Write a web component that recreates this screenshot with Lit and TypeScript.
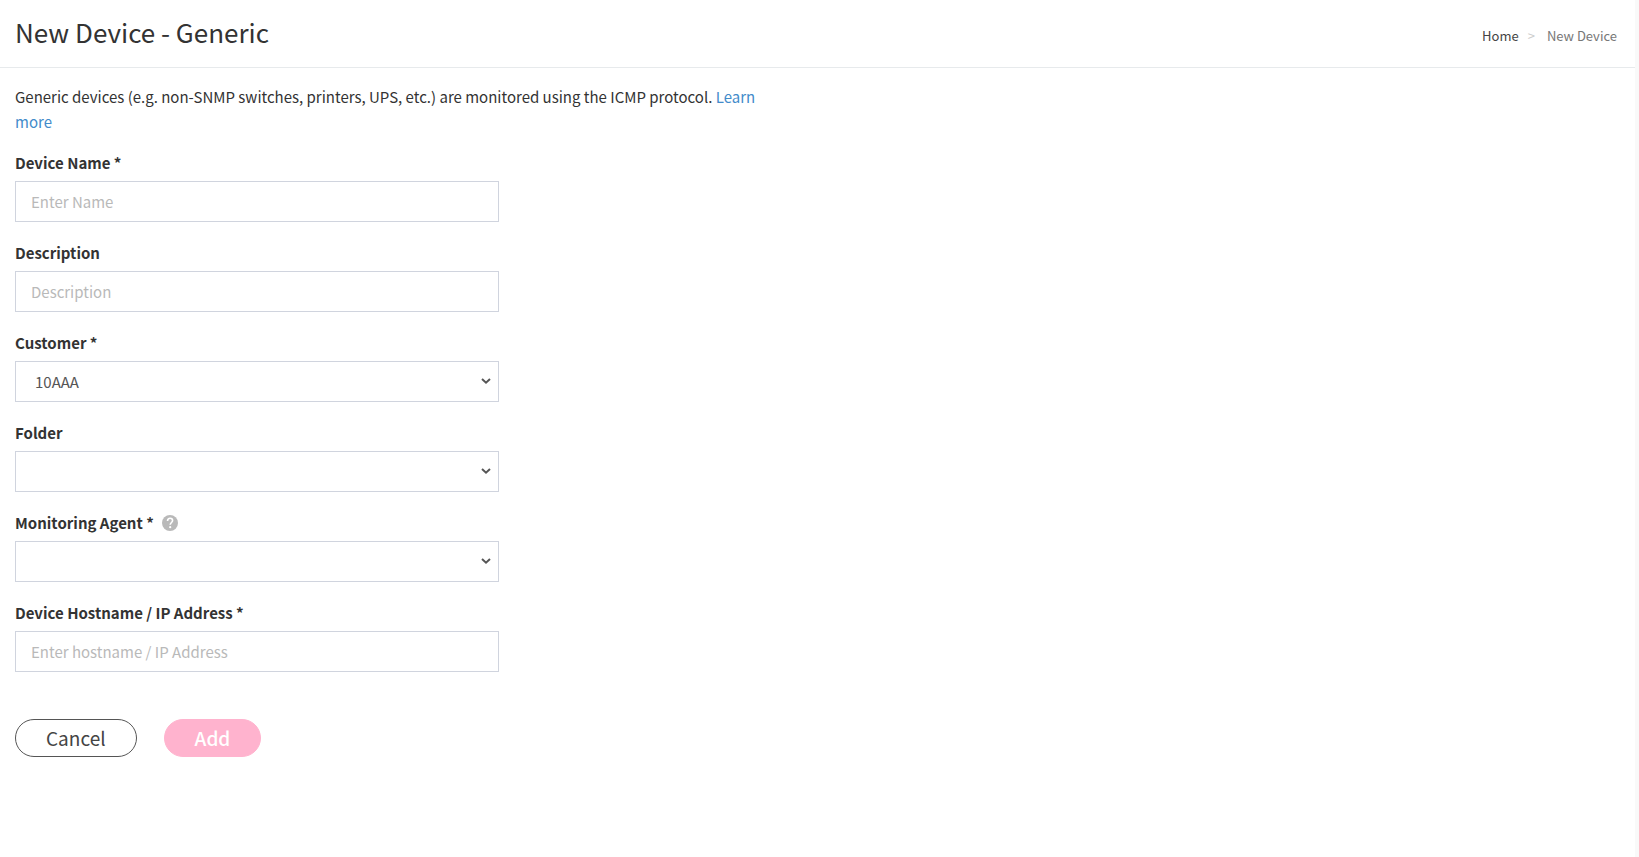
import { LitElement, html, css, svg } from "lit";
import { customElement } from "lit/decorators.js";

const helpIcon = svg`
  <circle cx="8" cy="8" r="8" fill="#b9b9b9"></circle>
  <path d="M5.500 6C5.600 4.200 6.700 3.200 8.100 3.200c1.500 0 2.500.9 2.500 2.300 0 1.900-2.400 2.100-2.400 4.300" fill="none" stroke="#fff" stroke-width="1.600"></path>
  <circle cx="8.200" cy="12.200" r="1.100" fill="#fff"></circle>`;

@customElement("app-root")
export class AppRoot extends LitElement {
  static styles = css`
    :host {
      display: block;
      box-sizing: border-box;
      min-height: 100vh;
      background: #fff;
      border-right: 4px solid #f9f9f9;
      color: #333;
      font-family: "Noto Sans CJK SC", "Noto Sans", sans-serif;
      font-size: 15px;
      line-height: 25px;
    }
    * {
      box-sizing: border-box;
    }
    .header {
      display: flex;
      align-items: center;
      justify-content: space-between;
      padding: 10px 18px 13px 15px;
      border-bottom: 1px solid #e7eaec;
    }
    .title {
      margin: 0;
      font-size: 26px;
      font-weight: 400;
      line-height: 44px;
    }
    .crumbs {
      display: flex;
      gap: 9px;
      margin: 0;
      padding: 8px 0 0;
      list-style: none;
      font-size: 13px;
      line-height: 20px;
      color: #777;
    }
    .crumbs a {
      color: #444;
      text-decoration: none;
    }
    .separator {
      padding-right: 3px;
      color: #ccc;
    }
    .content {
      padding: 16px 15px;
    }
    .intro {
      width: 50%;
      padding-right: 30px;
      margin: 0 0 16px;
    }
    .intro a {
      color: #428bca;
      text-decoration: none;
    }
    .form {
      display: flex;
      flex-direction: column;
      gap: 18px;
      max-width: 484px;
    }
    .field {
      display: flex;
      flex-direction: column;
      gap: 6px;
    }
    .caption {
      display: flex;
      align-items: center;
      gap: 8px;
    }
    .label {
      font-weight: 700;
    }
    .help {
      display: block;
      width: 16px;
      height: 16px;
    }
    .control {
      width: 100%;
      height: 41px;
      margin: 0;
      padding: 0 15px;
      border: 1px solid #d0d4de;
      border-radius: 0;
      background: #fff;
      color: #555;
      font: inherit;
    }
    .control::placeholder {
      color: #b9b9b9;
      opacity: 1;
    }
    select.control {
      appearance: none;
      padding: 0 30px 0 19px;
      background: #fff
        url("data:image/svg+xml,%3Csvg xmlns='http://www.w3.org/2000/svg' width='10' height='7'%3E%3Cpath d='M1 1l4 3.700L9 1' fill='none' stroke='%23555' stroke-width='2'/%3E%3C/svg%3E")
        no-repeat right 7px center;
    }
    .actions {
      display: flex;
      gap: 27px;
      padding-top: 29px;
    }
    .button {
      height: 38px;
      padding: 0 30px;
      border: 1px solid #555;
      border-radius: 19px;
      background: #fff;
      color: #444;
      font: inherit;
      font-size: 19px;
      line-height: 36px;
    }
    .button.primary {
      border-color: #ffb3ce;
      background: #ffb3ce;
      color: #fff;
      font-weight: 500;
    }
  `;

  private caption(id: string, text: string, extra: unknown = null) {
    return html`<div class="caption"><label class="label" for=${id}>${text}</label>${extra}</div>`;
  }

  private textField(id: string, label: string, placeholder: string) {
    return html`<div class="field">
      ${this.caption(id, label)}
      <input class="control" id=${id} type="text" placeholder=${placeholder} />
    </div>`;
  }

  private selectField(id: string, label: string, options: string[], extra: unknown = null) {
    return html`<div class="field">
      ${this.caption(id, label, extra)}
      <select class="control" id=${id}>
        ${options.map((o) => html`<option>${o}</option>`)}
      </select>
    </div>`;
  }

  render() {
    return html`
      <header class="header">
        <h1 class="title">New Device - Generic</h1>
        <nav aria-label="Breadcrumb">
          <ol class="crumbs">
            <li><a href="#">Home</a></li>
            <li class="separator" aria-hidden="true">&gt;</li>
            <li>New Device</li>
          </ol>
        </nav>
      </header>
      <main class="content">
        <p class="intro">
          Generic devices (e.g. non-SNMP switches, printers, UPS, etc.) are monitored using the ICMP protocol.
          <a href="#">Learn more</a>
        </p>
        <form class="form" @submit=${(e: Event) => e.preventDefault()}>
          ${this.textField("name", "Device Name *", "Enter Name")}
          ${this.textField("description", "Description", "Description")}
          ${this.selectField("customer", "Customer *", ["10AAA"])}
          ${this.selectField("folder", "Folder", [])}
          ${this.selectField(
            "agent",
            "Monitoring Agent *",
            [],
            html`<svg class="help" viewBox="0 0 16 16" aria-hidden="true">${helpIcon}</svg>`
          )}
          ${this.textField("host", "Device Hostname / IP Address *", "Enter hostname / IP Address")}
          <div class="actions">
            <button class="button" type="button">Cancel</button>
            <button class="button primary" type="submit" disabled>Add</button>
          </div>
        </form>
      </main>
    `;
  }
}
